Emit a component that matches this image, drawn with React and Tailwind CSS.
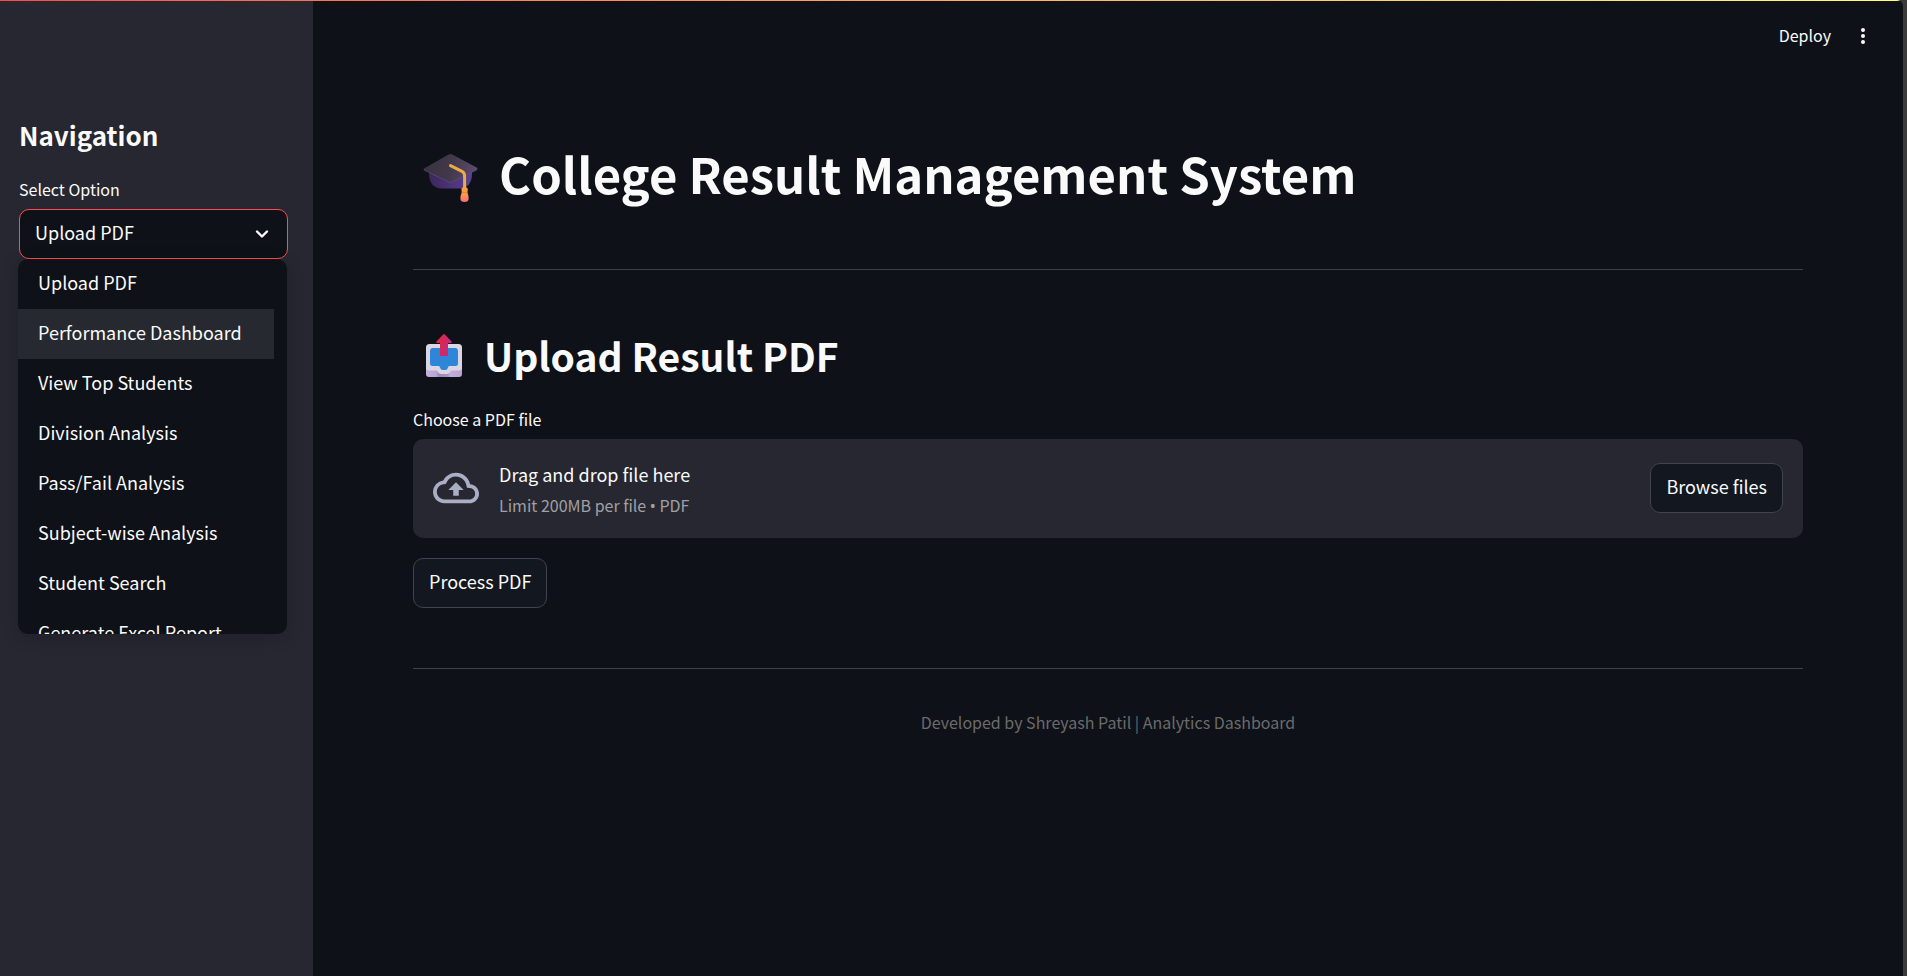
import { useState } from "react";

const OPTIONS = [
  "Upload PDF",
  "Performance Dashboard",
  "View Top Students",
  "Division Analysis",
  "Pass/Fail Analysis",
  "Subject-wise Analysis",
  "Student Search",
  "Generate Excel Report",
];

function GraduationCap() {
  return (
    <svg viewBox="0 0 70 65" className="ml-0.5 h-[65px] w-[70px] shrink-0" aria-hidden="true">
      <defs>
        <linearGradient id="capBoard" x1="0" y1="0.4" x2="1" y2="0.5">
          <stop offset="0" stopColor="#3a323f" />
          <stop offset="0.5" stopColor="#41384a" />
          <stop offset="1" stopColor="#5e4c70" />
        </linearGradient>
        <linearGradient id="capBase" x1="0" y1="0" x2="1" y2="0">
          <stop offset="0" stopColor="#3b275c" />
          <stop offset="1" stopColor="#5c3f92" />
        </linearGradient>
        <linearGradient id="capTassel" x1="0" y1="0" x2="0" y2="1">
          <stop offset="0" stopColor="#f6a23f" />
          <stop offset="0.5" stopColor="#fb9a4c" />
          <stop offset="1" stopColor="#fa6a7a" />
        </linearGradient>
      </defs>
      <path d="M14 24 L57 24 L57 29 C57 38 52 43.5 45 43.5 L27 43.5 C19 43.5 14 38 14 29 Z" fill="url(#capBase)" />
      <path d="M9 23.4 L33.6 9.6 Q35.4 8.6 37.2 9.6 L61.6 22.6 Q63.4 23.6 61.6 25 L37 37 Q35.4 37.8 33.8 37 L9 25 Q7.6 24.2 9 23.4 Z" fill="url(#capBoard)" />
      <path d="M9 25 L33.8 37 Q35.4 37.8 37 37 L61.6 25" fill="none" stroke="#6b5580" strokeWidth="0.8" opacity="0.7" />
      <path d="M35.5 20.6 L47 26.4 Q49.6 27.8 49.6 31 L49.6 44" fill="none" stroke="#e9ad45" strokeWidth="3" strokeLinecap="round" strokeLinejoin="round" />
      <path d="M46.4 44.6 Q46.4 42 49.6 42 Q52.8 42 52.8 44.6 L52.4 47.4 Q53.8 50.6 53.6 54 Q53.4 57 49.6 57 Q45.6 57 45.4 54 Q45.2 50.6 46.8 47.4 Z" fill="url(#capTassel)" />
      <path d="M46.6 47.4 H52.6" stroke="#e07c2e" strokeWidth="0.8" />
    </svg>
  );
}

function OutboxTray() {
  return (
    <svg viewBox="0 0 60 60" className="ml-0.5 h-[60px] w-[60px] shrink-0" aria-hidden="true">
      <defs>
        <linearGradient id="trayArrow" x1="0" y1="0" x2="1" y2="0.3">
          <stop offset="0" stopColor="#e8262f" />
          <stop offset="1" stopColor="#c22a86" />
        </linearGradient>
        <linearGradient id="trayFront" x1="0" y1="0" x2="1" y2="0">
          <stop offset="0" stopColor="#c5b2dc" />
          <stop offset="0.3" stopColor="#b9a3d3" />
          <stop offset="0.34" stopColor="#9d88b8" />
          <stop offset="0.6" stopColor="#a892c2" />
          <stop offset="0.68" stopColor="#c2addb" />
          <stop offset="1" stopColor="#b8a2d4" />
        </linearGradient>
      </defs>
      <rect x="11" y="22" width="36" height="30" rx="3" fill="url(#trayFront)" />
      <path d="M14.500 19 H43.500 Q47 19 47 22.500 V43 Q47 45.500 44 45.500 H36 Q34.500 49 31.500 49 H26.500 Q23.500 49 22 45.500 H14 Q11 45.500 11 43 V22.500 Q11 19 14.500 19 Z" fill="#dcd6e4" />
      <path d="M18 23 H40 Q43 23 43 26 V38.500 Q43 41 40.500 41 H34.500 Q33 41 33 42.500 Q32.500 45 30 45 H28 Q25.500 45 25 42.500 Q25 41 23.500 41 H17.500 Q15 41 15 38.500 V26 Q15 23 18 23 Z" fill="#2e86d9" />
      <path d="M28.200 9.400 Q29 8.600 29.800 9.400 L36.600 16.600 Q37.400 18 36 18 H33 V31 H25 V18 H22 Q20.600 18 21.400 16.600 Z" fill="url(#trayArrow)" />
    </svg>
  );
}

function CloudUpload() {
  return (
    <svg viewBox="0 0 24 24" className="size-[46px] shrink-0 fill-[#a9aec4]" aria-hidden="true">
      <path d="M19.350 10.040A7.490 7.490 0 0 0 12 4C9.110 4 6.600 5.640 5.350 8.040A5.994 5.994 0 0 0 0 14c0 3.310 2.690 6 6 6h13c2.760 0 5-2.240 5-5 0-2.640-2.050-4.780-4.650-4.960zM19 18H6c-2.210 0-4-1.790-4-4 0-2.050 1.530-3.760 3.560-3.970l1.070-.11.500-.95A5.469 5.469 0 0 1 12 6c2.620 0 4.880 1.860 5.390 4.430l.3 1.500 1.530.11A2.980 2.980 0 0 1 22 15c0 1.650-1.350 3-3 3zM8 13h2.550v3h2.900v-3H16l-4-4z" />
    </svg>
  );
}

function Sidebar() {
  const [selected, setSelected] = useState(OPTIONS[0]);
  const [active, setActive] = useState(OPTIONS[1]);

  return (
    <aside className="w-[313px] shrink-0 bg-[#262730] pt-[110px] pr-[25px] pl-[19px]">
      <h2 className="text-[26px] leading-12 font-bold">Navigation</h2>
      <label htmlFor="page" className="mt-4 mb-1.5 block text-base leading-7">
        Select Option
      </label>
      <div className="relative">
        <select
          id="page"
          value={selected}
          onChange={(e) => setSelected(e.target.value)}
          className="h-[50px] w-full appearance-none rounded-[10px] border border-[#ff4b4b] bg-[#0e1117] pr-10 pb-1 pl-[15px] text-lg outline-none"
        >
          {OPTIONS.map((o) => (
            <option key={o}>{o}</option>
          ))}
        </select>
        <svg viewBox="0 0 16 16" className="pointer-events-none absolute top-[17px] right-[18px] size-4" aria-hidden="true">
          <path d="M3 5.500 L8 10.500 L13 5.500" fill="none" stroke="#fafafa" strokeWidth="2.400" strokeLinecap="round" strokeLinejoin="round" />
        </svg>
        <ul
          role="listbox"
          aria-label="Select Option"
          className="absolute top-full -left-px h-[375px] w-full overflow-hidden rounded-[10px] bg-[#0e1117] pr-[13px] shadow-[0_4px_16px_rgba(14,17,23,0.25)]"
        >
          {OPTIONS.map((o) => (
            <li
              key={o}
              role="option"
              aria-selected={o === selected}
              onMouseEnter={() => setActive(o)}
              onClick={() => setSelected(o)}
              className={`flex h-[50px] cursor-pointer items-center px-5 pb-1 text-lg whitespace-nowrap ${
                o === active ? "bg-[#262930]" : ""
              }`}
            >
              {o}
            </li>
          ))}
        </ul>
      </div>
    </aside>
  );
}

function Main() {
  return (
    <main className="flex-1 px-[100px] pt-[69px]">
      <h1 className="flex items-center gap-3.5 text-[49px] leading-[66px] font-bold">
        <GraduationCap />
        <span className="pb-2">College Result Management System</span>
      </h1>
      <hr className="mt-[55px] border-[#404143]" />
      <h2 className="mt-[55px] flex items-center gap-[9px] text-[39px] leading-[60px] font-bold">
        <OutboxTray />
        <span>Upload Result PDF</span>
      </h2>
      <label htmlFor="file" className="mt-5 mb-1.5 block text-base leading-7">
        Choose a PDF file
      </label>
      <section className="flex items-center gap-5 rounded-[10px] bg-[#262730] px-5 pt-[17px] pb-[18px]">
        <CloudUpload />
        <div className="flex-1">
          <p className="text-lg leading-9">Drag and drop file here</p>
          <p className="text-base leading-[27px] text-[#a0a0a5]">
            Limit 200MB per file <span className="font-['Noto_Sans']">•</span> PDF
          </p>
        </div>
        <input id="file" type="file" accept="application/pdf" className="hidden" />
        <button
          type="button"
          onClick={() => document.getElementById("file").click()}
          className="h-[50px] rounded-[10px] border border-[#41444c] bg-[#131720] px-[15px] pb-1 text-lg"
        >
          Browse files
        </button>
      </section>
      <button type="button" className="mt-5 block h-[50px] rounded-[10px] border border-[#41444c] bg-[#131720] px-[15px] pb-1 text-lg">
        Process PDF
      </button>
      <hr className="mt-[60px] border-[#404143]" />
      <footer className="mt-[39px] text-center text-base leading-7 text-[#6b6b6b]">
        Developed by Shreyash Patil | Analytics Dashboard
      </footer>
    </main>
  );
}

export default function App() {
  return (
    <div className="min-h-screen bg-[#3b3b3b] pr-1 font-['Noto_Sans_CJK_SC','Noto_Sans',sans-serif] text-[#fafafa]">
      <div className="flex min-h-screen flex-col overflow-hidden rounded-tr-md bg-[#0e1117]">
        <div className="h-px bg-linear-to-r from-[#ff4b4b] to-[#fffd80]" />
        <div className="flex flex-1">
          <Sidebar />
          <div className="flex flex-1 flex-col">
            <header className="flex h-[70px] items-center justify-end gap-[22px] pr-[30px]">
              <button type="button" className="pb-0.5 text-base">
                Deploy
              </button>
              <button type="button" aria-label="Main menu">
                <svg viewBox="0 0 20 20" className="size-5 fill-[#fafafa]" aria-hidden="true">
                  <circle cx="10" cy="4" r="2" />
                  <circle cx="10" cy="10" r="2" />
                  <circle cx="10" cy="16" r="2" />
                </svg>
              </button>
            </header>
            <Main />
          </div>
        </div>
      </div>
    </div>
  );
}
